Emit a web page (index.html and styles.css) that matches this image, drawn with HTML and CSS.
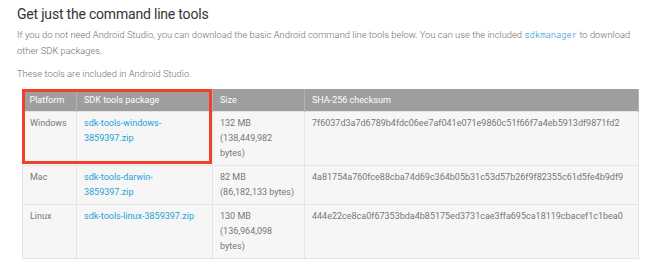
FILE: index.html
```html
<!DOCTYPE html>
<html lang="en">
<head>
    <meta charset="UTF-8">
    <title>Get just the command line tools</title>
    <link rel="stylesheet" href="styles.css">
</head>
<body>
    <div class="container">
        <h2>Get just the command line tools</h2>
        <p>If you do not need Android Studio, you can download the basic Android command line tools below. You can use the included <code>sdkmanager</code> to download other SDK packages.</p>
        <p>These tools are included in Android Studio.</p>

        <div class="table-wrap">
            <table class="downloads">
                <colgroup>
                    <col class="col-platform">
                    <col class="col-package">
                    <col class="col-size">
                    <col class="col-sha">
                </colgroup>
                <thead>
                    <tr>
                        <th>Platform</th>
                        <th>SDK tools package</th>
                        <th>Size</th>
                        <th>SHA-256 checksum</th>
                    </tr>
                </thead>
                <tbody>
                    <tr>
                        <td>Windows</td>
                        <td class="package"><a href="#">sdk-tools-windows-3859397.zip</a></td>
                        <td class="size">132 MB<br>(138,449,982<br>bytes)</td>
                        <td>7f6037d3a7d6789b4fdc06ee7af041e071e9860c51f66f7a4eb5913df9871fd2</td>
                    </tr>
                    <tr>
                        <td>Mac</td>
                        <td class="package"><a href="#">sdk-tools-darwin-3859397.zip</a></td>
                        <td class="size">82 MB<br>(86,182,133 bytes)</td>
                        <td>4a81754a760fce88cba74d69c364b05b31c53d57b26f9f82355c61d5fe4b9df9</td>
                    </tr>
                    <tr>
                        <td>Linux</td>
                        <td class="package"><a href="#">sdk-tools-linux-3859397.zip</a></td>
                        <td class="size">130 MB<br>(136,964,098<br>bytes)</td>
                        <td>444e22ce8ca0f67353bda4b85175ed3731cae3ffa695ca18119cbacef1c1bea0</td>
                    </tr>
                </tbody>
            </table>
            <!-- recuadro rojo sobre Windows -->
            <div class="highlight"></div>
        </div>
    </div>
</body>
</html>
```

FILE: styles.css
```css
body {
    font-family: Roboto, 'Noto Sans', sans-serif;
    background-color: #fff;
    color: #757575;
    margin: 0;
    padding: 0;
}
.container {
    padding: 5px 12px 0 17px;
}
h2 {
    font-size: 14px;
    font-weight: 400;
    color: #333;
    margin: 0 0 4px;
    line-height: 18px;
    letter-spacing: -0.2px;
}
p {
    font-size: 9.4px;
    line-height: 16px;
    margin: 0 0 7px;
    font-weight: 300;
    color: #6f6f6f;
}
code {
    font-family: 'Roboto Mono', 'DejaVu Sans Mono', monospace;
    font-size: 8.8px;
    color: #1a8fd0;
}
.table-wrap {
    position: relative;
    margin: 7px 0 0 5px;
    width: 616px;
}
.downloads {
    width: 616px;
    border-collapse: collapse;
    table-layout: fixed;
    font-size: 9px;
    line-height: 15px;
}
.col-platform { width: 54px; }
.col-package { width: 136px; }
.col-size { width: 92px; }
.col-sha { width: 334px; }
.downloads th {
    background-color: #9e9e9e;
    color: #fff;
    font-weight: 400;
    text-align: left;
    height: 22px;
    padding: 0 7px;
    border-right: 1px solid #b3b3b3;
}
.downloads td {
    background-color: #f6f6f6;
    color: #777;
    vertical-align: top;
    padding: 4px 7px;
    border: 1px solid #e4e4e4;
    word-wrap: break-word;
}
.downloads td.package {
    padding-right: 16px;
}
.downloads td.size {
    padding-right: 2px;
}
.downloads a {
    color: #24a2d6;
    text-decoration: none;
}
.highlight {
    position: absolute;
    left: 0;
    top: 0;
    width: 184px;
    height: 69px;
    border: 3px solid #f1402b;
}
```
